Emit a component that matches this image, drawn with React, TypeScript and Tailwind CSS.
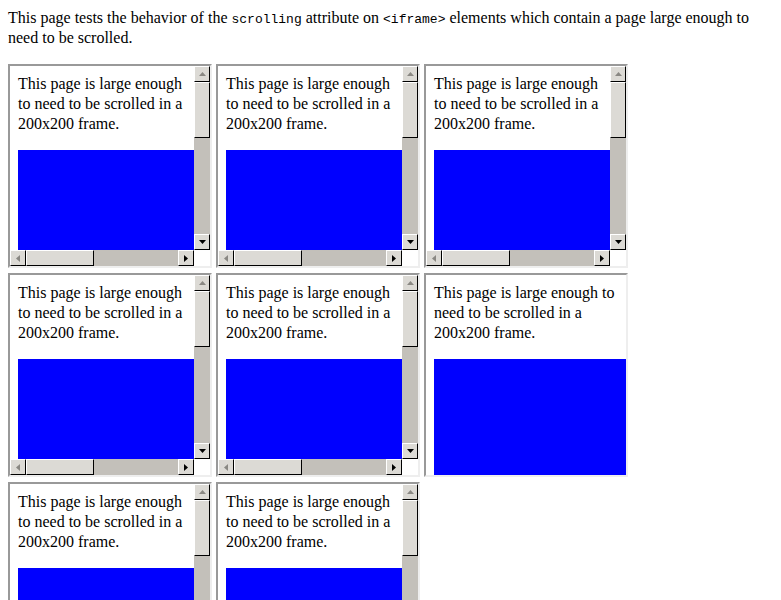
import React from "react";

type Mode = "both" | "vertical" | "none";

function Arrow({ dir, dim }: { dir: "up" | "down" | "left" | "right"; dim?: boolean }) {
    const pts = {
        up: "0,4 7,4 3.5,0",
        down: "0,0 7,0 3.5,4",
        left: "4,0 4,7 0,3.5",
        right: "0,0 0,7 4,3.5",
    }[dir];
    const box = dir === "up" || dir === "down" ? "0 0 7 4" : "0 0 4 7";
    const w = dir === "up" || dir === "down" ? 7 : 4;
    const h = dir === "up" || dir === "down" ? 4 : 7;
    return (
        <svg width={w} height={h} viewBox={box}>
            <polygon points={pts} fill={dim ? "#8a8883" : "#000"} />
        </svg>
    );
}

function Button({ children }: { children: React.ReactNode }) {
    return (
        <div className="w-[16px] h-[16px] shrink-0 flex items-center justify-center bg-[#dcdad5] border border-t-white border-l-white border-r-black border-b-black">
            {children}
        </div>
    );
}

function VScroll() {
    return (
        <div className="w-[16px] h-full flex flex-col bg-[#c3c0ba]">
            <Button>
                <Arrow dir="up" dim />
            </Button>
            <div className="h-[56px] bg-[#dcdad5] border border-t-white border-l-white border-r-black border-b-black" />
            <div className="flex-grow" />
            <Button>
                <Arrow dir="down" />
            </Button>
        </div>
    );
}

function HScroll() {
    return (
        <div className="h-[16px] w-full flex bg-[#c3c0ba]">
            <Button>
                <Arrow dir="left" dim />
            </Button>
            <div className="w-[68px] bg-[#dcdad5] border border-t-white border-l-white border-r-black border-b-black" />
            <div className="flex-grow" />
            <Button>
                <Arrow dir="right" />
            </Button>
        </div>
    );
}

function Content() {
    return (
        <div className="w-full text-[16px] leading-[20px] text-black" style={{ fontFamily: '"Liberation Serif", serif' }}>
            <p className="px-[8px] pt-[8px] pb-[16px]">This page is large enough to need to be scrolled in a 200x200 frame.</p>
            <div className="ml-[8px] w-[400px] h-[400px] bg-[#0000ff]" />
        </div>
    );
}

function Frame({ mode }: { mode: Mode }) {
    const vs = mode !== "none";
    const hs = mode === "both";
    return (
        <div className="w-[204px] h-[204px] shrink-0 border-2 border-t-[#999999] border-l-[#999999] border-r-[#eeeeee] border-b-[#eeeeee] bg-white">
            <div className="w-[200px] h-[200px] grid" style={{ gridTemplateColumns: vs ? "184px 16px" : "200px", gridTemplateRows: hs ? "184px 16px" : "200px" }}>
                <div className="overflow-hidden">
                    <Content />
                </div>
                {vs && <VScroll />}
                {hs && <HScroll />}
                {hs && <div className="bg-white" />}
            </div>
        </div>
    );
}

export default function App() {
    const frames: Mode[] = ["both", "both", "both", "both", "both", "none", "vertical", "vertical"];
    const mono = { fontFamily: '"Liberation Mono", monospace' };
    return (
        <div className="p-[8px] bg-white text-black" style={{ fontFamily: '"Liberation Serif", serif' }}>
            <p className="text-[16px] leading-[20px] mb-[16px]">
                This page tests the behavior of the{" "}
                <code className="text-[13px] leading-none" style={mono}>scrolling</code> attribute on{" "}
                <code className="text-[13px] leading-none" style={mono}>&lt;iframe&gt;</code> elements which contain a page large enough to need to be scrolled.
            </p>
            <div className="flex flex-wrap gap-x-[4px] gap-y-[5px]">
                {frames.map((m, i) => (
                    <Frame key={i} mode={m} />
                ))}
            </div>
        </div>
    );
}
